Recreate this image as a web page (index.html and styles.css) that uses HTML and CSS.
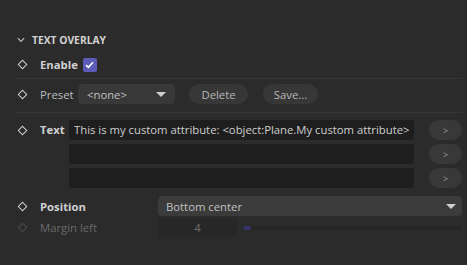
FILE: index.html
```html
<!DOCTYPE html>
<html>
<head>
<meta charset="utf-8">
<link rel="stylesheet" href="styles.css">
</head>
<body>
<div class="panel">
  <div class="header">
    <svg class="chev" width="8" height="6" viewBox="0 0 8 6"><path d="M0.8 1.2 L4 4.4 L7.2 1.2" fill="none" stroke="#bdbdbd" stroke-width="1.2"/></svg>
    <span class="title">TEXT OVERLAY</span>
  </div>

  <div class="row row-enable sep">
    <span class="dia"></span>
    <span class="label bold">Enable</span>
    <span class="check"><svg width="9" height="8" viewBox="0 0 9 8"><path d="M1 4.2 L3.4 6.4 L8 1.2" fill="none" stroke="#fff" stroke-width="1.6"/></svg></span>
  </div>

  <div class="row row-preset sep">
    <span class="dia"></span>
    <span class="label">Preset</span>
    <div class="select preset-select"><span>&lt;none&gt;</span><span class="tri"></span></div>
    <button class="pill delete">Delete</button>
    <button class="pill save">Save...</button>
  </div>

  <div class="text-block">
    <span class="dia dia-text"></span>
    <span class="label bold label-text">Text</span>
    <div class="inputs">
      <div class="line"><div class="input">This is my custom attribute: &lt;object:Plane.My custom attribute&gt;</div><button class="go">&gt;</button></div>
      <div class="line"><div class="input"></div><button class="go">&gt;</button></div>
      <div class="line"><div class="input"></div><button class="go">&gt;</button></div>
    </div>
  </div>

  <div class="row row-position">
    <span class="dia"></span>
    <span class="label bold">Position</span>
    <div class="select pos-select"><span>Bottom center</span><span class="tri"></span></div>
  </div>

  <div class="row row-margin">
    <span class="dia dim"></span>
    <span class="label dimtext">Margin left</span>
    <div class="numbox">4</div>
    <div class="slider"><div class="fill" style="width:8px"></div></div>
  </div>
</div>
</body>
</html>
```

FILE: styles.css
```css
* { box-sizing: border-box; }
html, body { margin: 0; padding: 0; }
body {
  background: #2b2b2b;
  font-family: "Open Sans", "Noto Sans", sans-serif;
  font-size: 11.3px;
  color: #c8c8c8;
  width: 467px;
  height: 265px;
  overflow: hidden;
}
.panel { padding: 32px 5px 0 14px; }
.header {
  height: 16px;
  display: flex;
  align-items: center;
  padding-left: 3px;
}
.chev { margin-right: 7px; }
.title { font-weight: 700; font-size: 10.3px; color: #d2d2d2; }

.row { display: flex; align-items: center; }
.sep { border-bottom: 1px solid #363636; }
.dia {
  width: 7px; height: 7px;
  border: 1.3px solid #d0d0d0;
  transform: rotate(45deg);
  margin-left: 5px;
  margin-right: 14px;
  flex: none;
}
.dia.dim { border-color: #4a4a4a; }
.label { color: #bdbdbd; }
.bold { font-weight: 700; color: #d0d0d0; }
.dimtext { color: #6a6a6a; }

.row-enable { height: 31px; padding-top: 3px; }
.check {
  width: 14px; height: 14px;
  background: #5c5cb8;
  border-radius: 2px;
  margin-left: 5px;
  display: flex; align-items: center; justify-content: center;
}

.row-preset { height: 34px; padding-bottom: 3px; }
.row-preset .label { width: 38px; }
.select {
  display: flex; align-items: center; justify-content: space-between;
  height: 20px;
  border-radius: 4px;
  background: #383838;
  padding: 0 9px 0 9px;
  color: #c0c0c0;
}
.preset-select { width: 97px; }
.tri {
  width: 0; height: 0;
  border-left: 5px solid transparent;
  border-right: 5px solid transparent;
  border-top: 5px solid #cfcfcf;
}
.pill {
  font: inherit;
  height: 20px;
  border: none;
  border-radius: 10px;
  background: #373737;
  color: #b8b8b8;
  padding: 0;
}
.delete { width: 59px; margin-left: 14px; }
.save { width: 55px; margin-left: 15px; }

.text-block {
  display: grid;
  grid-template-columns: 26px 29px 1fr;
  padding-top: 7px;
}
.dia-text { margin-top: 7px; }
.label-text { line-height: 20px; }
.inputs { display: flex; flex-direction: column; gap: 4px; }
.line { display: flex; align-items: center; }
.input {
  width: 345px; height: 20px;
  background: #1e1e1e;
  border-radius: 3px;
  padding: 0 5px;
  line-height: 20px;
  color: #cfcfcf;
  white-space: nowrap;
  overflow: hidden;
}
.go {
  font: inherit;
  font-size: 9px;
  width: 33px; height: 20px;
  margin-left: 15px;
  border: none;
  border-radius: 10px;
  background: #383838;
  color: #9a9a9a;
  padding: 0;
}

.row-position { height: 20px; margin-top: 8px; }
.row-position .label { width: 118px; }
.pos-select { flex: 1; background: #3b3b3b; padding: 0 6px 0 8px; }

.row-margin { height: 19px; margin-top: 2px; }
.row-margin .label { width: 118px; }
.numbox {
  width: 79px; height: 19px;
  background: #272727;
  color: #707070;
  text-align: center;
  line-height: 19px;
}
.slider {
  flex: 1;
  height: 4px;
  margin-left: 6px;
  background: #262626;
  border-radius: 2px;
}
.fill { height: 4px; background: #35356a; border-radius: 2px; }
```
